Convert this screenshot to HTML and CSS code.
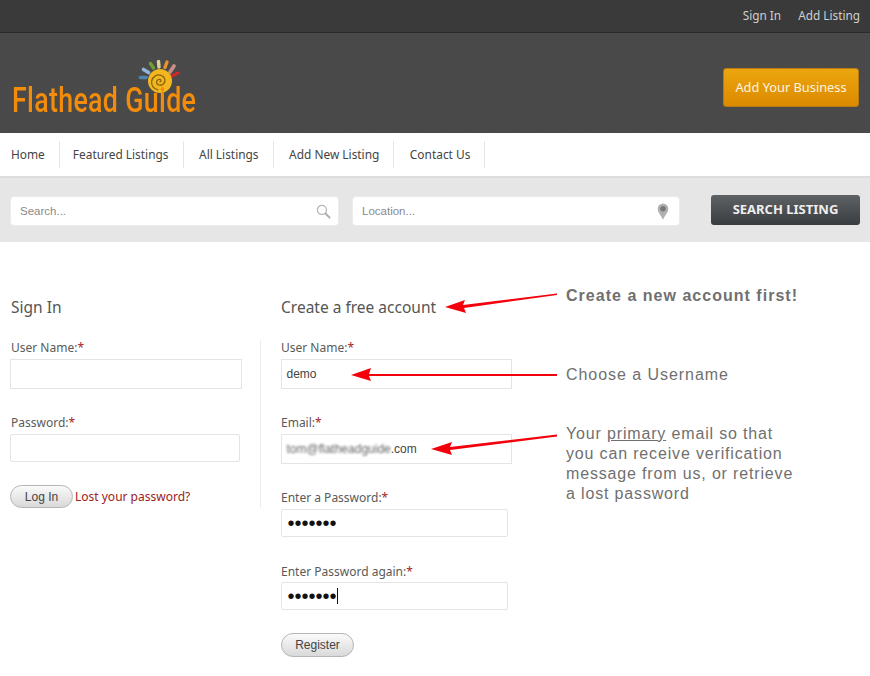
FILE: index.html
```html
<!DOCTYPE html>
<html lang="en">
<head>
<meta charset="utf-8">
<title>Flathead Guide</title>
<link rel="stylesheet" href="styles.css">
</head>
<body>
<div class="topbar">
  <a href="#">Sign In</a>
  <a href="#">Add Listing</a>
</div>
<header class="header">
  <div class="logo">
    <svg class="sun" viewBox="0 0 44 34" width="44" height="34" aria-hidden="true">
      <g fill="none" stroke-linecap="round">
        <path d="M2.500 17.500L8 17.500" stroke="#4f86b0" stroke-width="3.600"/>
        <path d="M5.500 9.500L10.500 12.500" stroke="#8fb6d8" stroke-width="3.600"/>
        <path d="M12.500 3.500L15.500 8" stroke="#6f9e36" stroke-width="3.400"/>
        <path d="M20.500 1.500L21 7" stroke="#d8d39a" stroke-width="3.400"/>
        <path d="M29 2L27 7.500" stroke="#e8922a" stroke-width="3.400"/>
        <path d="M36 6L32 12" stroke="#c98f86" stroke-width="3.800"/>
        <path d="M40 13L34 16" stroke="#d8262a" stroke-width="3"/>
      </g>
      <circle cx="22" cy="21" r="12" fill="#f2b71f"/>
      <path d="M22 22c1.800-.8 1-3-1-2.600-3 .6-3.400 4.600-.2 5.600 4 1.200 7-2.600 6-6-1-3.400-5.600-5.200-9.400-3.200-4 2.200-5 7.600-2.400 11 1.200 1.600 3 2.600 5 3" fill="none" stroke="#8a6410" stroke-width="1.300" stroke-linecap="round"/>
    </svg>
    <span class="logo-text">Flathead Guide</span>
  </div>
  <a class="cta" href="#">Add Your Business</a>
</header>
<nav class="nav">
  <a href="#">Home</a>
  <a href="#">Featured Listings</a>
  <a href="#">All Listings</a>
  <a href="#">Add New Listing</a>
  <a href="#">Contact Us</a>
</nav>
<section class="searchbar">
  <div class="searchbox box-search">
    <span>Search...</span>
    <svg viewBox="0 0 16 16" width="15" height="15" aria-hidden="true"><circle cx="6.300" cy="6.300" r="4.800" fill="none" stroke="#b5b5b5" stroke-width="1.300"/><path d="M10 10l4.500 4.500" stroke="#a8a8a8" stroke-width="2" stroke-linecap="round"/></svg>
  </div>
  <div class="searchbox box-location">
    <span>Location...</span>
    <svg viewBox="1.500 1 11 16" width="12" height="17" aria-hidden="true"><path d="M7 17C5.800 13 2 10.500 2 6.500a5 5 0 0 1 10 0C12 10.500 8.200 13 7 17z" fill="#b0b0b0"/><circle cx="7" cy="6.500" r="2.600" fill="#777"/></svg>
  </div>
  <a class="search-btn" href="#">SEARCH LISTING</a>
</section>
<main class="main">
  <section class="col col-signin">
    <h2>Sign In</h2>
    <div class="divider-wrap">
      <label class="lab">User Name:<b>*</b></label>
      <div class="field f-tall f-230"></div>
      <label class="lab lab-next">Password:<b>*</b></label>
      <div class="field f-short f-228"></div>
      <div class="actions">
        <button class="btn btn-login" type="button">Log In</button>
        <a class="lost" href="#">Lost your password?</a>
      </div>
    </div>
  </section>
  <section class="col col-register">
    <h2>Create a free account</h2>
    <label class="lab">User Name:<b>*</b></label>
    <div class="field f-tall f-230 val">demo</div>
    <label class="lab lab-next">Email:<b>*</b></label>
    <div class="field f-tall f-230 val"><span class="blurred">tom@flatheadguide</span>.com</div>
    <label class="lab lab-next">Enter a Password:<b>*</b></label>
    <div class="field f-short f-226 dots">•••••••</div>
    <label class="lab lab-pw2">Enter Password again:<b>*</b></label>
    <div class="field f-short f-226 dots"><span class="caret">•••••••</span></div>
    <button class="btn btn-register" type="button">Register</button>
  </section>
</main>
<svg class="arrows" viewBox="0 0 870 676" width="870" height="676" aria-hidden="true">
  <g fill="#f4000c" stroke="none">
    <path d="M557 293.500L463 305L465 300L445 307L466 313L464 308L557 295z"/>
    <path d="M557 374L369 374L371 368L351 375L371 381L369 376L557 376z"/>
    <path d="M557 434.500L450 447L452 442L431 449L452 455L450 450L557 436.500z"/>
  </g>
</svg>
<p class="note note-1">Create a new account first!</p>
<p class="note note-2">Choose a Username</p>
<p class="note note-3">Your <u>primary</u> email so that<br>you can receive verification<br>message from us, or retrieve<br>a lost password</p>
</body>
</html>
```
FILE: styles.css
```css
* { box-sizing: border-box; }
html, body { margin: 0; padding: 0; }
body {
  width: 870px;
  height: 676px;
  overflow: hidden;
  position: relative;
  background: #fff;
  font-family: "Noto Sans", "Open Sans", sans-serif;
  color: #555;
}
a { text-decoration: none; color: inherit; }

.topbar {
  height: 33px;
  display: flex;
  justify-content: flex-end;
  align-items: center;
  gap: 17px;
  padding: 0 10px 2px 0;
  font-size: 11.800px;
  color: #cfcfcf;
  background: #3a3a3a;
  border-bottom: 1px solid #2a2a2a;
}
.header {
  height: 100px;
  display: flex;
  justify-content: space-between;
  align-items: flex-start;
  padding-right: 11px;
  background: #494949;
  background-image: radial-gradient(#4c4c4c 0.5px, transparent 0.6px);
  background-size: 3px 3px;
}
.logo {
  position: relative;
  width: 200px;
  height: 100px;
}
.sun {
  position: absolute;
  left: 138px;
  top: 27px;
}
.logo-text {
  position: absolute;
  left: 12px;
  top: 48px;
  font-family: "Roboto", sans-serif;
  font-size: 35px;
  font-weight: 500;
  line-height: 40px;
  color: #f28c0a;
  white-space: nowrap;
  transform: scaleX(0.766);
  transform-origin: 0 50%;
  letter-spacing: 0.400px;
}
.cta {
  margin-top: 35px;
  width: 136px;
  height: 39px;
  padding-bottom: 2px;
  display: flex;
  align-items: center;
  justify-content: center;
  font-size: 12.800px;
  color: #fdf3e0;
  background: linear-gradient(#eba60e, #dc8a00);
  border: 1px solid #b87a10;
  border-radius: 3px;
}
.nav {
  height: 43px;
  display: flex;
  align-items: flex-start;
  padding: 8px 0 0 0;
  background: #fff;
  font-size: 11.900px;
  color: #444;
}
.nav a {
  height: 27px;
  padding: 0 14px 2px 15.500px;
  display: flex;
  align-items: center;
  border-right: 1px solid #e6e6e6;
}
.nav a:first-child { padding-left: 11px; }
.nav a:nth-child(2) { padding-left: 13px; }
.searchbar {
  height: 66px;
  display: flex;
  align-items: flex-start;
  padding: 18px 10px 0 10px;
  background: #e6e6e6;
  border-top: 2px solid #dcdcdc;
}
.searchbox {
  height: 30px;
  display: flex;
  align-items: center;
  justify-content: space-between;
  background: #fff;
  border: 1px solid #ececec;
  border-radius: 4px;
  padding: 0 7px 0 9px;
  font-family: "Liberation Sans", Arial, sans-serif;
  font-size: 11.500px;
  color: #8a8a8a;
}
.box-search { width: 329px; margin-right: 13px; }
.box-location { width: 328px; margin-right: 31px; padding-right: 10px; }
.search-btn {
  width: 149px;
  height: 30px;
  margin-top: -1px;
  padding-bottom: 2px;
  display: flex;
  align-items: center;
  justify-content: center;
  font-size: 13px;
  font-weight: 700;
  color: #eee;
  background: linear-gradient(#5f6264, #3a3d3f);
  border-radius: 3px;
}
.main {
  display: flex;
  padding: 54px 0 0 11px;
}
.col { display: flex; flex-direction: column; align-items: flex-start; }
.col-signin { width: 270px; }
.col-signin .field, .col-signin .btn { margin-left: -1px; }
.col-signin .f-230 { width: 232px; }
.col-signin .f-228 { width: 230px; }
h2 {
  margin: 0;
  height: 23px;
  line-height: 23px;
  font-size: 15.500px;
  font-weight: 400;
  color: #555;
}
.divider-wrap {
  width: 250px;
  height: 168px;
  margin-top: 21px;
  padding-top: 1px;
  border-right: 1px solid #ececec;
  display: flex;
  flex-direction: column;
  align-items: flex-start;
}
.col-register h2 { margin-bottom: 22px; }
.lab {
  display: block;
  height: 18px;
  line-height: 14px;
  font-size: 12px;
  color: #5a5a5a;
}
.lab b { color: #a51f1f; font-weight: 400; }
.lab-next { margin-top: 27px; }
.lab-pw2 { margin-top: 28px; height: 17px; }
.field {
  background: #fff;
  border: 1px solid #e4e4e4;
  display: flex;
  align-items: center;
  padding-left: 4.500px;
}
.f-tall { height: 30px; }
.f-short { height: 28px; border-radius: 2px; }
.f-230 { width: 231px; }
.f-228 { width: 229px; }
.f-226 { width: 227px; }
.val {
  font-family: "Liberation Sans", Arial, sans-serif;
  font-size: 12px;
  color: #444;
}
.blurred { filter: blur(1.300px); color: #666; }
.dots {
  font-family: "Liberation Sans", Arial, sans-serif;
  font-size: 20px;
  color: #111;
  padding-left: 5.500px;
}
.caret { border-right: 1px solid #111; line-height: 16px; }
.actions {
  margin-top: 23px;
  display: flex;
  align-items: center;
  gap: 2px;
}
.btn {
  height: 24px;
  padding: 0;
  border: 1px solid #b5b5b5;
  border-radius: 12px;
  background: linear-gradient(#fafafa, #d9d9d9);
  font-family: "Liberation Sans", Arial, sans-serif;
  font-size: 12px;
  color: #444;
}
.btn-login { width: 63px; height: 23px; }
.btn-register { width: 73px; margin-top: 23px; }
.lost { font-size: 12px; color: #a02020; }
.arrows {
  position: absolute;
  left: 0;
  top: 0;
  pointer-events: none;
}
.note {
  position: absolute;
  left: 566px;
  margin: 0;
  font-family: "Liberation Sans", Arial, sans-serif;
  font-size: 16px;
  line-height: 20px;
  letter-spacing: 0.840px;
  color: #707070;
  white-space: nowrap;
}
.note-1 { top: 286px; font-weight: 700; letter-spacing: 1.020px; }
.note-2 { top: 365px; letter-spacing: 0.950px; }
.note-3 { top: 424px; }
```
